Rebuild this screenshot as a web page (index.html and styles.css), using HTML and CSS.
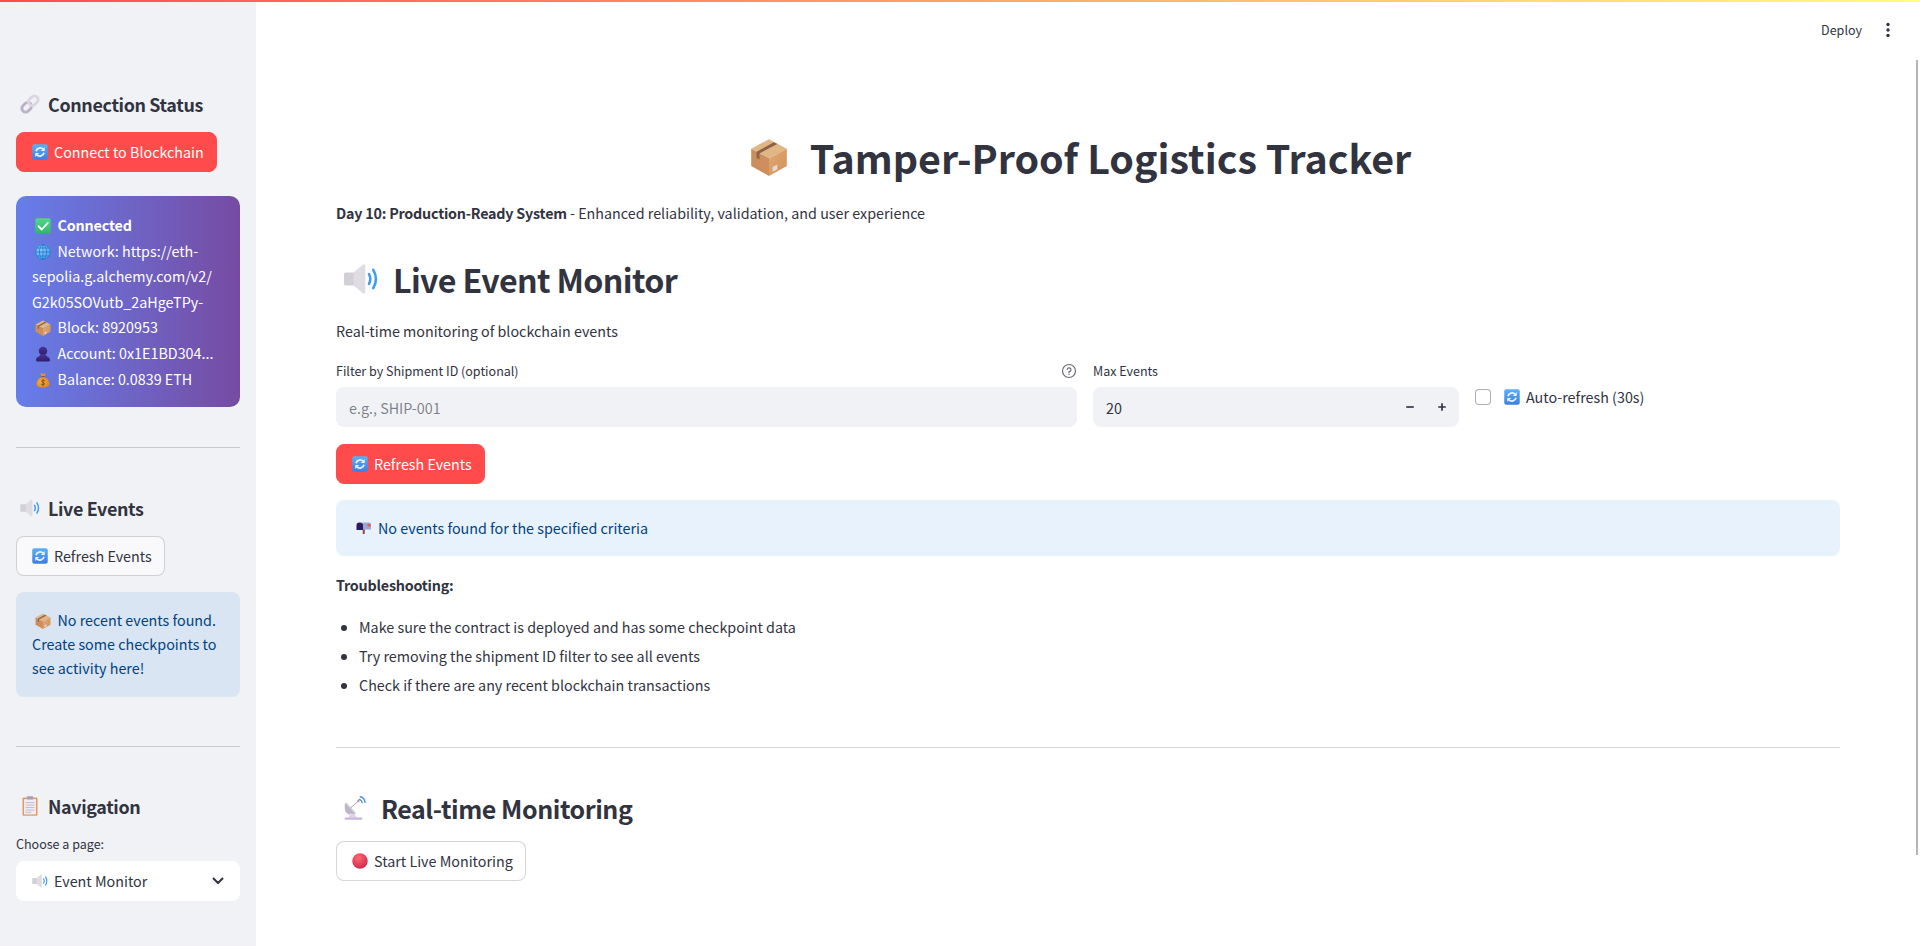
FILE: index.html
```html
<!DOCTYPE html>
<html lang="en">
<head>
<meta charset="utf-8">
<title>Tamper-Proof Logistics Tracker</title>
<link rel="stylesheet" href="styles.css">
</head>
<body>
<svg class="sprite" aria-hidden="true">
  <defs>
    <linearGradient id="gBlue" x1="0" y1="0" x2="0" y2="1"><stop offset="0" stop-color="#5cb0f6"/><stop offset="1" stop-color="#3a7fe6"/></linearGradient>
    <linearGradient id="gBoxL" x1="0" y1="0" x2="1" y2="1"><stop offset="0" stop-color="#c98d5e"/><stop offset="1" stop-color="#d08f5c"/></linearGradient>
    <linearGradient id="gBoxR" x1="0" y1="0" x2="1" y2="1"><stop offset="0" stop-color="#e2aa72"/><stop offset="1" stop-color="#cf9058"/></linearGradient>
    <linearGradient id="gBust" x1="0" y1="0" x2="0" y2="1"><stop offset="0" stop-color="#4a3490"/><stop offset="1" stop-color="#2f1e6e"/></linearGradient>
    <radialGradient id="gRed" cx=".4" cy=".3" r=".8"><stop offset="0" stop-color="#fb6a72"/><stop offset="1" stop-color="#cf1f4a"/></radialGradient>
    <radialGradient id="gBag" cx=".4" cy=".45" r=".7"><stop offset="0" stop-color="#fbb13c"/><stop offset="1" stop-color="#dd7a1e"/></radialGradient>
    <linearGradient id="gGreen" x1="0" y1="0" x2="0" y2="1"><stop offset="0" stop-color="#55d68a"/><stop offset="1" stop-color="#2fb56b"/></linearGradient>
    <radialGradient id="gGlobe" cx=".4" cy=".35" r=".8"><stop offset="0" stop-color="#8ed0fa"/><stop offset="1" stop-color="#3f97ea"/></radialGradient>
    <symbol id="i-box" viewBox="0 0 32 32">
      <path d="M16 1 31 9 16 17 1 9Z" fill="#dfb684"/>
      <path d="M1 9 16 17V32L1 23.5Z" fill="url(#gBoxL)"/>
      <path d="M31 9 16 17V32L31 23.5Z" fill="url(#gBoxR)"/>
      <path d="M23 5 8 13V18L5.500 16.600V11.600L20 3.600Z" fill="#8f6248"/>
      <path d="M19 24.500 23 22.400V26.400L19 28.500Z" fill="#e9d8d8"/>
    </symbol>
    <symbol id="i-speaker" viewBox="0.500 1 33 30">
      <path d="M1 11.500Q1 10 2.500 10H11V22H2.500Q1 22 1 20.500Z" fill="#d2cfd7"/>
      <path d="M10 10 19 2.500Q21 1.500 21 4V28Q21 30.500 19 29.500L10 22Z" fill="#dfdce4"/>
      <path d="M24.500 11.500Q27 16 24.500 20.500" fill="none" stroke="#3f9cf4" stroke-width="2.400" stroke-linecap="round"/>
      <path d="M28.500 7.500Q33.500 16 28.500 24.500" fill="none" stroke="#3f9cf4" stroke-width="2.400" stroke-linecap="round"/>
    </symbol>
    <symbol id="i-refresh" viewBox="0 0 32 32">
      <rect x="0.500" y="0.500" width="31" height="31" rx="4" fill="url(#gBlue)"/>
      <path d="M8 14.500A8.500 8.500 0 0 1 22.500 10.500" fill="none" stroke="#e8f3fe" stroke-width="3.400"/>
      <path d="M25.500 6V14H17.500Z" fill="#e8f3fe"/>
      <path d="M24 17.500A8.500 8.500 0 0 1 9.500 21.500" fill="none" stroke="#e8f3fe" stroke-width="3.400"/>
      <path d="M6.500 26V18H14.500Z" fill="#e8f3fe"/>
    </symbol>
    <symbol id="i-link" viewBox="0 0 32 32">
      <g fill="none" transform="rotate(-45 16 16)">
        <rect x="0" y="10" width="17" height="12" rx="6" stroke="#bdb2c9" stroke-width="4.600"/>
        <rect x="15" y="10" width="17" height="12" rx="6" stroke="#dcd6e2" stroke-width="4.600"/>
      </g>
    </symbol>
    <symbol id="i-check" viewBox="0 0 32 32">
      <rect x="0.500" y="0.500" width="31" height="31" rx="4" fill="url(#gGreen)"/>
      <path d="M7 16.500 13.500 23 25.500 10" fill="none" stroke="#fff" stroke-width="3.600" stroke-linecap="round" stroke-linejoin="round"/>
    </symbol>
    <symbol id="i-globe" viewBox="0 0 32 32">
      <circle cx="16" cy="16" r="15.500" fill="url(#gGlobe)"/>
      <g fill="none" stroke="#1f70c8" stroke-width="1.500">
        <circle cx="16" cy="16" r="14.700"/>
        <ellipse cx="16" cy="16" rx="7" ry="14.700"/>
        <path d="M16 1V31M1.500 16H30.500M4 8H28M4 24H28"/>
      </g>
    </symbol>
    <symbol id="i-bust" viewBox="0 0 32 32">
      <circle cx="16" cy="10" r="8.500" fill="url(#gBust)"/>
      <path d="M11 16.500C11 21 2 21 2 28Q2 31 5 31H27Q30 31 30 28C30 21 21 21 21 16.500Z" fill="url(#gBust)"/>
    </symbol>
    <symbol id="i-bag" viewBox="0 0 32 32">
      <path d="M11 2Q16 4.500 21 2L19.500 8.500H12.500Z" fill="#e3942a"/>
      <rect x="12" y="8" width="8" height="2.500" rx="1" fill="#8d5a2b"/>
      <path d="M12.500 10.500C6 13 3 19 3 23.500 3 29 8 31 16 31S29 29 29 23.500C29 19 26 13 19.500 10.500Z" fill="url(#gBag)"/>
      <path d="M19.500 17.500Q16 15.500 13.500 17.500 12 19.800 16 20.800 20 21.800 18.600 24.500 16 26.500 12.500 24.500M16 14.500V27.500" fill="none" stroke="#7a4a1c" stroke-width="1.700" stroke-linecap="round"/>
    </symbol>
    <symbol id="i-clip" viewBox="0 0 32 32">
      <rect x="4" y="2.500" width="24" height="29" rx="2" fill="#e39a62"/>
      <rect x="6.500" y="5" width="19" height="24.500" fill="#f1edf3"/>
      <rect x="11" y="0.500" width="10" height="5" rx="1" fill="#a99fb5"/>
      <path d="M9 10.500H23M9 14.500H23M9 18.500H23M9 22.500H23M9 26H18" stroke="#bdb7c8" stroke-width="1.500"/>
    </symbol>
    <symbol id="i-red" viewBox="0 0 32 32">
      <circle cx="16" cy="16" r="15.500" fill="url(#gRed)"/>
    </symbol>
    <symbol id="i-mail" viewBox="0 0 32 32">
      <rect x="13.500" y="20" width="4" height="10" fill="#8f4a3c"/>
      <path d="M8 7H26Q30 7 30 11V21H14V12Q14 7 8 7Z" fill="#9aa8d8"/>
      <path d="M7 7Q14 7 14 12V22H1V12Q1 7 7 7Z" fill="#2c1a5c"/>
      <rect x="23" y="10" width="6" height="5" fill="#ef5a3c"/>
    </symbol>
    <symbol id="i-dish" viewBox="0 0 32 32">
      <path d="M3 9 17 23C12 27 5 25 3 20 2 16 2 12 3 9Z" fill="#bdb6c6"/>
      <path d="M4 9 16 22" stroke="#dcd7e2" stroke-width="1.500"/>
      <path d="M10 16 20 7" stroke="#a89fb3" stroke-width="1.300"/>
      <circle cx="20.500" cy="6.500" r="1.700" fill="#a89fb3"/>
      <path d="M10 23 7 29H19L15 24Z" fill="#dcd5e6"/>
      <rect x="2" y="28.500" width="24" height="3" rx="1.500" fill="#c5b4e0"/>
      <path d="M22 4.500Q25 5.500 25.500 9M23 1Q28.500 2 29.500 8.500" fill="none" stroke="#3f8cf0" stroke-width="1.700" stroke-linecap="round"/>
    </symbol>
  </defs>
</svg>

<div class="deco"></div>

<div class="app">
  <aside class="sidebar">
    <h3 class="side-head"><svg class="emoji e20"><use href="#i-link"/></svg><span>Connection Status</span></h3>
    <button class="btn primary side-connect"><svg class="emoji e16"><use href="#i-refresh"/></svg><span>Connect to Blockchain</span></button>
    <div class="status-card">
      <div class="status-line strong"><svg class="emoji e16"><use href="#i-check"/></svg>Connected</div>
      <div><svg class="emoji e16"><use href="#i-globe"/></svg>Network: https://eth-</div>
      <div>sepolia.g.alchemy.com/v2/</div>
      <div>G2k05SOVutb_2aHgeTPy-</div>
      <div><svg class="emoji e16"><use href="#i-box"/></svg>Block: 8920953</div>
      <div><svg class="emoji e16"><use href="#i-bust"/></svg>Account: 0x1E1BD304...</div>
      <div><svg class="emoji e16"><use href="#i-bag"/></svg>Balance: 0.0839 ETH</div>
    </div>
    <hr class="side-rule first">
    <h3 class="side-head live"><svg class="emoji e20"><use href="#i-speaker"/></svg><span>Live Events</span></h3>
    <button class="btn secondary side-refresh"><svg class="emoji e16"><use href="#i-refresh"/></svg><span>Refresh Events</span></button>
    <div class="side-info">
      <div><svg class="emoji e16"><use href="#i-box"/></svg>No recent events found.</div>
      <div>Create some checkpoints to</div>
      <div>see activity here!</div>
    </div>
    <hr class="side-rule second">
    <h3 class="side-head nav"><svg class="emoji e20"><use href="#i-clip"/></svg><span>Navigation</span></h3>
    <label class="side-label">Choose a page:</label>
    <div class="select">
      <svg class="emoji e16 select-icon"><use href="#i-speaker"/></svg>
      <span class="select-text">Event Monitor</span>
      <svg class="chevron" viewBox="0 0 16 16"><path d="M3.500 5.500 8 10l4.500-4.500" fill="none" stroke="#31333f" stroke-width="2" stroke-linecap="round" stroke-linejoin="round"/></svg>
    </div>
  </aside>

  <main class="main">
    <h1 class="title"><svg class="emoji e-title"><use href="#i-box"/></svg><span>Tamper-Proof Logistics Tracker</span></h1>
    <p class="lead"><strong>Day 10: Production-Ready System</strong> - Enhanced reliability, validation, and user experience</p>
    <h2 class="section"><svg class="emoji e-section"><use href="#i-speaker"/></svg><span>Live Event Monitor</span></h2>
    <p class="sub">Real-time monitoring of blockchain events</p>

    <div class="controls">
      <div class="field">
        <div class="field-label"><span>Filter by Shipment ID (optional)</span>
          <svg class="help" viewBox="0 0 16 16"><circle cx="8" cy="8" r="6.500" fill="none" stroke="#6d6f78" stroke-width="1.200"/><path d="M6.200 6.400A1.900 1.900 0 1 1 8 8.600V9.400" fill="none" stroke="#6d6f78" stroke-width="1.200" stroke-linecap="round"/><circle cx="8" cy="11.300" r=".8" fill="#6d6f78"/></svg>
        </div>
        <input class="text-input" type="text" placeholder="e.g., SHIP-001">
      </div>
      <div class="field">
        <div class="field-label"><span>Max Events</span></div>
        <div class="number-input">
          <span class="number-value">20</span>
          <svg class="step minus" viewBox="0 0 12 12"><path d="M1.500 6h9" stroke="#31333f" stroke-width="2"/></svg>
          <svg class="step plus" viewBox="0 0 12 12"><path d="M1.500 6h9M6 1.500v9" stroke="#31333f" stroke-width="2"/></svg>
        </div>
      </div>
      <label class="check">
        <span class="check-box"></span>
        <svg class="emoji e16"><use href="#i-refresh"/></svg>
        <span class="check-text">Auto-refresh (30s)</span>
      </label>
    </div>

    <button class="btn primary main-refresh"><svg class="emoji e16"><use href="#i-refresh"/></svg><span>Refresh Events</span></button>
    <div class="alert"><svg class="emoji e16"><use href="#i-mail"/></svg><span>No events found for the specified criteria</span></div>
    <p class="trouble"><strong>Troubleshooting:</strong></p>
    <ul class="tips">
      <li>Make sure the contract is deployed and has some checkpoint data</li>
      <li>Try removing the shipment ID filter to see all events</li>
      <li>Check if there are any recent blockchain transactions</li>
    </ul>
    <hr class="main-rule">
    <h3 class="realtime"><svg class="emoji e-rt"><use href="#i-dish"/></svg><span>Real-time Monitoring</span></h3>
    <button class="btn secondary white"><svg class="emoji e16"><use href="#i-red"/></svg><span>Start Live Monitoring</span></button>
  </main>
</div>

<div class="toolbar">
  <span class="deploy">Deploy</span>
  <svg class="kebab" viewBox="0 0 6 16"><circle cx="3" cy="2.500" r="1.700"/><circle cx="3" cy="8" r="1.700"/><circle cx="3" cy="13.500" r="1.700"/></svg>
</div>
<div class="scroll-thumb"></div>
</body>
</html>
```

FILE: styles.css
```css
* { box-sizing: border-box; }

html, body {
  margin: 0;
  height: 946px;
  overflow: hidden;
  background: #fff;
  color: #31333f;
  font-family: "Noto Sans CJK SC", "Noto Sans", sans-serif;
  font-size: 14.32px;
}

.sprite { position: absolute; width: 0; height: 0; }

.deco {
  position: absolute;
  top: 0; left: 0; right: 0;
  height: 2px;
  background: linear-gradient(90deg, #ff4b4b, #fffd80);
  z-index: 3;
}

.app { display: flex; height: 946px; }

.emoji { flex: none; display: inline-block; }
.e16 { width: 16px; height: 16px; }
.e20 { width: 20px; height: 20px; }

/* Sidebar */
.sidebar {
  width: 256px;
  flex: none;
  background: #f0f2f6;
  padding: 88px 16px 0;
}

.side-head {
  display: flex;
  align-items: center;
  gap: 8px;
  height: 32px;
  margin: 0 0 12px;
  padding: 0 0 1px 4px;
  font-size: 17.9px;
  line-height: 30px;
  font-weight: 600;
  letter-spacing: -0.35px;
}

.btn {
  display: inline-flex;
  align-items: center;
  gap: 6px;
  height: 40px;
  padding: 0 13px 0 15px;
  border-radius: 8px;
  border: 1px solid transparent;
  font: inherit;
  line-height: 24px;
  color: inherit;
  background: none;
  white-space: nowrap;
}

.btn.primary { background: #ff4b4b; border-color: #ff4b4b; color: #fff; }
.btn.secondary { background: #f9f9fb; border-color: rgba(49, 51, 63, .2); }
.btn.white { background: #fff; }

.side-connect { display: flex; width: 201px; }

.status-card {
  margin-top: 24px;
  height: 211px;
  padding: 16px;
  border-radius: 10px;
  background: linear-gradient(90deg, #667eea, #764ba2);
  color: #fff;
  line-height: 25.6px;
}

.status-card div { white-space: nowrap; }
.status-card .emoji { margin: 0 6.5px 0 3px; vertical-align: -3px; }
.status-line.strong { font-weight: 700; letter-spacing: -0.15px; }

.side-rule {
  margin: 0;
  border: 0;
  border-top: 1px solid rgba(49, 51, 63, .2);
}
.side-rule.first { margin-top: 40px; }
.side-rule.second { margin-top: 49px; }

.side-head.live { margin-top: 44px; }
.side-head.nav { margin-top: 43px; }

.side-refresh { display: flex; width: 149px; }

.side-info {
  margin-top: 16px;
  height: 105px;
  padding: 16px;
  border-radius: 8px;
  background: #d9e5f2;
  color: #004280;
  line-height: 24px;
  white-space: nowrap;
}
.side-info .emoji { margin: 0 6.5px 0 3px; vertical-align: -3px; }

.side-label {
  display: block;
  margin-top: 9px;
  height: 20px;
  font-size: 12.53px;
  line-height: 20px;
}

.select {
  display: flex;
  align-items: center;
  gap: 6px;
  height: 40px;
  margin-top: 7px;
  padding: 0 14px 0 16px;
  border-radius: 8px;
  background: #fff;
}
.select-text { flex: 1; line-height: 24px; }
.chevron { width: 16px; height: 16px; flex: none; }

/* Main */
.main {
  flex: 1;
  min-width: 0;
  padding: 126px 80px 0;
}

.title {
  display: flex;
  justify-content: center;
  align-items: center;
  gap: 22px;
  height: 64px;
  margin: 0 0 11px;
  padding: 0 15px 2px 0;
  font-size: 39.4px;
  line-height: 62px;
  font-weight: 700;
}
.e-title { width: 38px; height: 44px; }

.lead, .sub, .trouble { margin: 0; line-height: 24px; }
.lead strong, .trouble strong { font-weight: 600; letter-spacing: -0.22px; }

.section {
  display: flex;
  align-items: center;
  gap: 14px;
  height: 44px;
  margin: 33px 0 17px;
  padding: 0 0 2px 7px;
  font-size: 32.2px;
  line-height: 42px;
  font-weight: 600;
  letter-spacing: -0.64px;
}
.e-section { width: 36px; height: 32px; }

.controls {
  display: grid;
  grid-template-columns: 741px 366px 1fr;
  gap: 16px;
  margin-top: 18px;
}

.field-label {
  display: flex;
  justify-content: space-between;
  align-items: center;
  height: 20px;
  font-size: 12.53px;
  line-height: 20px;
}
.help { width: 16px; height: 16px; }

.text-input, .number-input {
  display: flex;
  align-items: center;
  width: 100%;
  height: 40px;
  margin-top: 6px;
  border: 0;
  border-radius: 8px;
  background: #f0f2f6;
  font: inherit;
  color: #31333f;
  padding: 0 14px 0 13px;
  outline: none;
}
.text-input::placeholder { color: rgba(49, 51, 63, .6); opacity: 1; }

.number-value { flex: 1; }
.step { width: 10px; height: 10px; flex: none; }
.minus { margin-right: 22px; }
.plus { margin-right: -2px; }

.check {
  display: flex;
  align-items: center;
  height: 24px;
  margin-top: 24px;
}
.check-box {
  width: 16px;
  height: 16px;
  margin-right: 13px;
  border: 1px solid rgba(49, 51, 63, .4);
  border-radius: 4px;
  background: #fff;
}
.check-text { margin-left: 6px; line-height: 20px; }

.main-refresh { display: flex; width: 149px; margin-top: 17px; }

.alert {
  display: flex;
  align-items: center;
  gap: 6px;
  height: 56px;
  margin-top: 16px;
  padding: 0 16px 2px 20px;
  border-radius: 8px;
  background: #e8f2fc;
  color: #004280;
}

.trouble { margin-top: 17px; }

.tips {
  margin: 18px 0 0;
  padding: 0 0 0 23px;
  line-height: 24px;
}
.tips li { margin-bottom: 5px; }

.main-rule {
  margin: 50px 0 0;
  border: 0;
  border-top: 1px solid rgba(49, 51, 63, .2);
}

.realtime {
  display: flex;
  align-items: center;
  gap: 14px;
  height: 36px;
  margin: 42px 0 15px;
  padding-left: 7px;
  font-size: 25px;
  line-height: 36px;
  font-weight: 600;
  letter-spacing: -0.45px;
}
.e-rt { width: 24px; height: 28px; }

.realtime + .btn { display: flex; width: 190px; }

/* Toolbar and scrollbar lie over the page */
.toolbar {
  position: absolute;
  top: 20px;
  right: 29px;
  display: flex;
  align-items: center;
  gap: 23px;
  height: 20px;
  font-size: 12.53px;
}
.deploy { line-height: 20px; }
.kebab { width: 6px; height: 16px; fill: #31333f; }

.scroll-thumb {
  position: absolute;
  top: 60px;
  right: 2px;
  width: 2px;
  height: 795px;
  background: #b5b5b8;
}
```
